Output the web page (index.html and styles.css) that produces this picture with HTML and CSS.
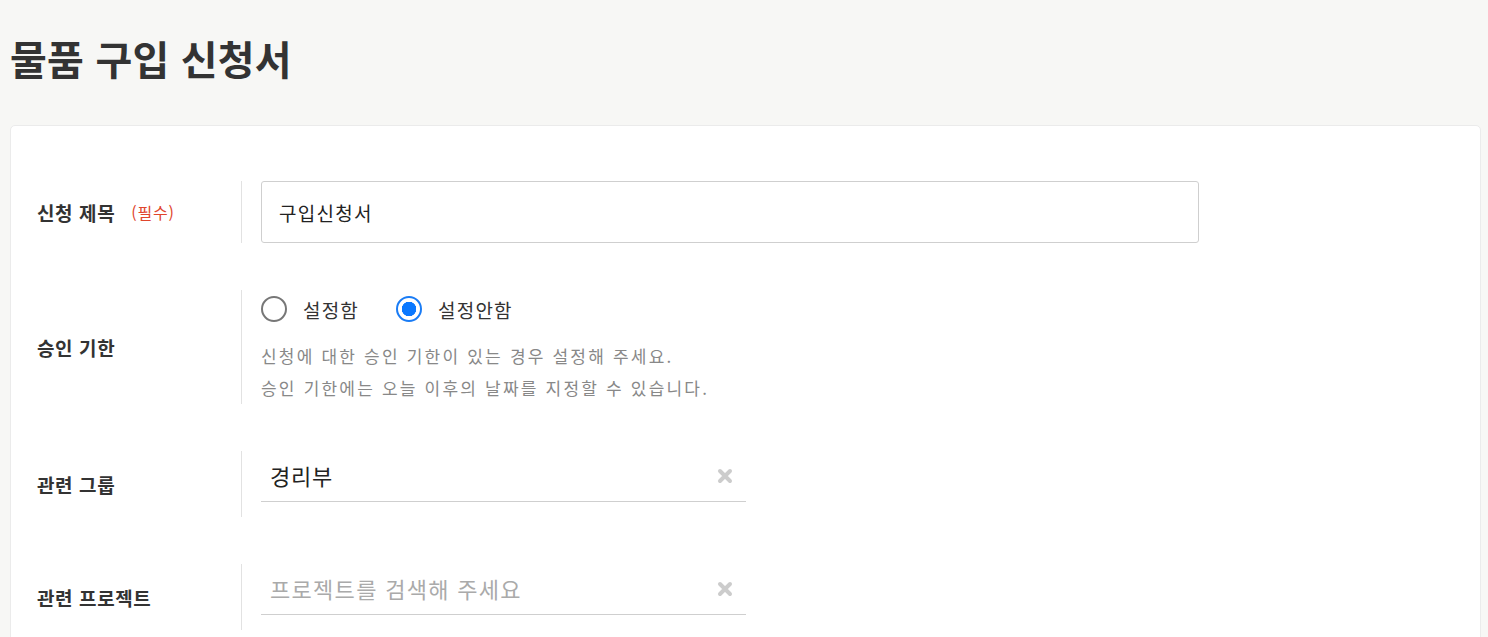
FILE: index.html
```html
<!DOCTYPE html>
<html lang="ko">
<head>
<meta charset="utf-8">
<title>물품 구입 신청서</title>
<link rel="stylesheet" href="styles.css">
</head>
<body>
<div class="page">
  <header class="page-header">
    <h1 class="page-title">물품 구입 신청서</h1>
  </header>
  <section class="card">
    <div class="form-row">
      <div class="form-label">신청 제목 <span class="required">(필수)</span></div>
      <div class="form-field">
        <div class="text-input">구입신청서</div>
      </div>
    </div>
    <div class="form-row">
      <div class="form-label">승인 기한</div>
      <div class="form-field">
        <div class="radio-group">
          <label class="radio"><span class="radio-circle"></span><span class="radio-text">설정함</span></label>
          <label class="radio"><span class="radio-circle is-checked"></span><span class="radio-text">설정안함</span></label>
        </div>
        <p class="help">신청에 대한 승인 기한이 있는 경우 설정해 주세요.<br>승인 기한에는 오늘 이후의 날짜를 지정할 수 있습니다.</p>
      </div>
    </div>
    <div class="form-row row-select">
      <div class="form-label">관련 그룹</div>
      <div class="form-field">
        <div class="select-input">
          <span class="select-value">경리부</span>
          <svg class="clear-icon" width="16" height="16" viewBox="0 0 16 16"><path d="M3 3L13 13M13 3L3 13" stroke="#cccccc" stroke-width="4" stroke-linecap="round"/></svg>
        </div>
      </div>
    </div>
    <div class="form-row row-select">
      <div class="form-label">관련 프로젝트</div>
      <div class="form-field">
        <div class="select-input">
          <span class="select-value is-placeholder">프로젝트를 검색해 주세요</span>
          <svg class="clear-icon" width="16" height="16" viewBox="0 0 16 16"><path d="M3 3L13 13M13 3L3 13" stroke="#cccccc" stroke-width="4" stroke-linecap="round"/></svg>
        </div>
      </div>
    </div>
  </section>
</div>
</body>
</html>
```
FILE: styles.css
```css
* { box-sizing: border-box; }
html, body { margin: 0; padding: 0; }
body {
  background: #f7f7f5;
  font-family: "Noto Sans CJK KR", "Noto Sans", sans-serif;
  color: #333;
  overflow: hidden;
}
.page { padding: 0 7px 0 10px; }
.page-header { padding: 34px 0 43px; }
.page-title {
  margin: 0;
  font-size: 40px;
  line-height: 48px;
  font-weight: 700;
  color: #333;
  letter-spacing: 0.2px;
}
.card {
  background: #fff;
  border: 1px solid #ebebeb;
  border-radius: 5px;
  padding: 55px 26px 60px;
  display: flex;
  flex-direction: column;
  gap: 47px;
}
.form-row { display: flex; align-items: stretch; }
.form-label {
  width: 205px;
  flex: none;
  display: flex;
  align-items: center;
  font-size: 19px;
  font-weight: 700;
  color: #333;
  letter-spacing: 0.6px;
  border-right: 1px solid #e2e2e2;
}
.required {
  color: #e0452d;
  font-weight: 400;
  font-size: 16px;
  margin-left: 16px;
  letter-spacing: 0.8px;
}
.form-field { padding-left: 19px; flex: none; }
.text-input {
  width: 938px;
  height: 62px;
  border: 1px solid #cfcfcf;
  border-radius: 3px;
  padding: 0 17px;
  display: flex;
  align-items: center;
  font-size: 19px;
  letter-spacing: 1.3px;
  color: #222;
}
.radio-group { display: flex; gap: 37px; height: 38px; align-items: center; }
.radio { display: flex; align-items: center; gap: 16px; font-size: 19px; letter-spacing: 1.2px; color: #333; }
.radio-circle {
  width: 26px; height: 26px; border-radius: 50%;
  border: 2px solid #777;
  background: #fff;
  flex: none;
}
.radio-circle.is-checked {
  border-color: #1a7cf5;
  background: radial-gradient(circle, #0a78ff 0 7px, #fff 7.5px);
}
.help {
  margin: 12px 0 0;
  font-size: 17px;
  line-height: 32px;
  color: #888;
  letter-spacing: 2.2px;
}
.row-select { min-height: 66px; }
.select-input {
  width: 485px;
  height: 51px;
  border-bottom: 1px solid #cfcfcf;
  padding: 0 13px 3px 9px;
  display: flex;
  align-items: center;
  justify-content: space-between;
}
.select-value { font-size: 22px; color: #222; letter-spacing: 0.7px; }
.select-value.is-placeholder { color: #aaa; letter-spacing: 1.3px; }
.clear-icon { flex: none; margin-top: 2px; }
```
